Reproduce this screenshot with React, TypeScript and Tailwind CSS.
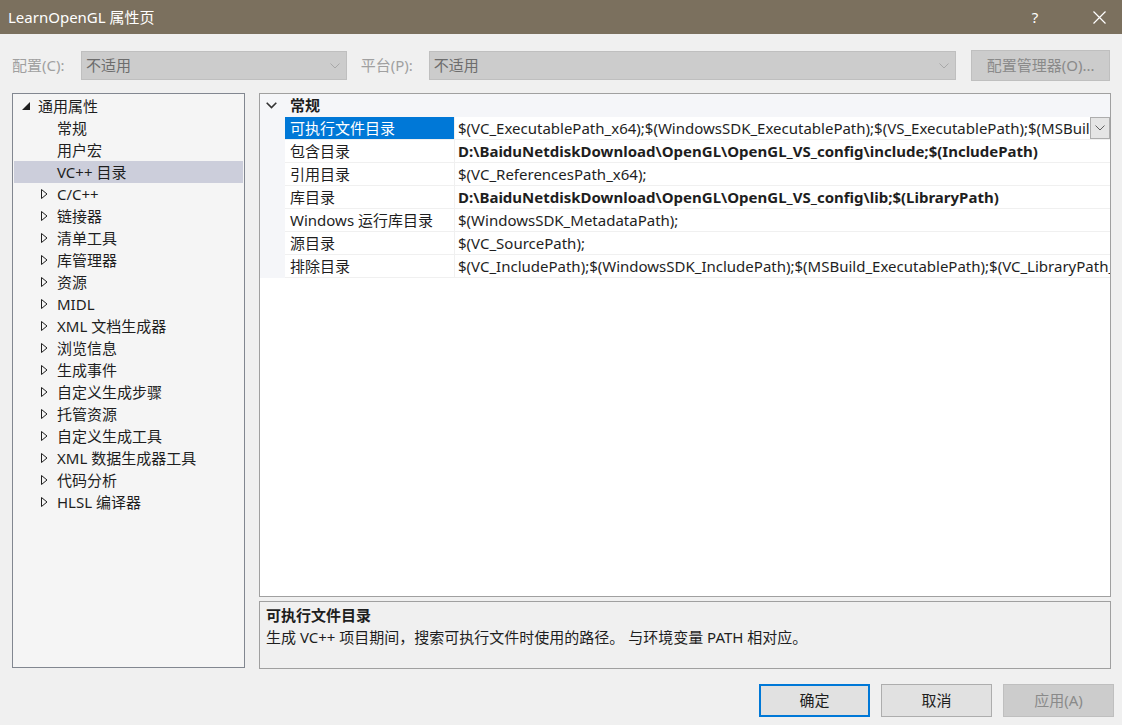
import React from "react"

const tree: { label: string; level: 0 | 1; kind: "open" | "closed" | "leaf"; selected?: boolean }[] = [
  { label: "通用属性", level: 0, kind: "open" },
  { label: "常规", level: 1, kind: "leaf" },
  { label: "用户宏", level: 1, kind: "leaf" },
  { label: "VC++ 目录", level: 1, kind: "leaf", selected: true },
  { label: "C/C++", level: 1, kind: "closed" },
  { label: "链接器", level: 1, kind: "closed" },
  { label: "清单工具", level: 1, kind: "closed" },
  { label: "库管理器", level: 1, kind: "closed" },
  { label: "资源", level: 1, kind: "closed" },
  { label: "MIDL", level: 1, kind: "closed" },
  { label: "XML 文档生成器", level: 1, kind: "closed" },
  { label: "浏览信息", level: 1, kind: "closed" },
  { label: "生成事件", level: 1, kind: "closed" },
  { label: "自定义生成步骤", level: 1, kind: "closed" },
  { label: "托管资源", level: 1, kind: "closed" },
  { label: "自定义生成工具", level: 1, kind: "closed" },
  { label: "XML 数据生成器工具", level: 1, kind: "closed" },
  { label: "代码分析", level: 1, kind: "closed" },
  { label: "HLSL 编译器", level: 1, kind: "closed" },
]

const props: { name: string; value: string; bold?: boolean; selected?: boolean }[] = [
  {
    name: "可执行文件目录",
    value: "$(VC_ExecutablePath_x64);$(WindowsSDK_ExecutablePath);$(VS_ExecutablePath);$(MSBuild_ExecutablePath);$(FxCopDir);$(PATH);",
    selected: true,
  },
  { name: "包含目录", value: "D:\\BaiduNetdiskDownload\\OpenGL\\OpenGL_VS_config\\include;$(IncludePath)", bold: true },
  { name: "引用目录", value: "$(VC_ReferencesPath_x64);" },
  { name: "库目录", value: "D:\\BaiduNetdiskDownload\\OpenGL\\OpenGL_VS_config\\lib;$(LibraryPath)", bold: true },
  { name: "Windows 运行库目录", value: "$(WindowsSDK_MetadataPath);" },
  { name: "源目录", value: "$(VC_SourcePath);" },
  {
    name: "排除目录",
    value: "$(VC_IncludePath);$(WindowsSDK_IncludePath);$(MSBuild_ExecutablePath);$(VC_LibraryPath_x64);",
  },
]

function Chevron({ color = "#8a8a8a" }: { color?: string }) {
  return (
    <svg width="10" height="6" viewBox="0 0 10 6" fill="none">
      <path d="M0.5 0.5L5 5L9.5 0.5" stroke={color} strokeWidth="1" />
    </svg>
  )
}

function Combo({ width }: { width: string }) {
  return (
    <div className={`${width} h-[29px] bg-[#cccccc] border border-[#bfbfbf] flex items-center justify-between pl-[4px] pr-[6px] text-[#6d6d6d]`}>
      <span>不适用</span>
      <Chevron color="#a8a8a8" />
    </div>
  )
}

export default function App() {
  return (
    <div className="w-[1122px] h-[725px] bg-[#f0f0f0] flex flex-col overflow-hidden text-[15px] text-[#1e1e1e] font-['Noto_Sans','Noto_Sans_CJK_SC',sans-serif]">
      {/* 标题栏 */}
      <div className="h-[34px] bg-[#7b705e] flex items-center text-white shrink-0">
        <span className="pl-[8px] flex-1">LearnOpenGL 属性页</span>
        <span className="w-[30px] text-center mr-[26px]">?</span>
        <span className="w-[46px] flex justify-center">
          <svg width="13" height="13" viewBox="0 0 13 13">
            <path d="M0.5 0.5L12.5 12.5M12.5 0.5L0.5 12.5" stroke="white" strokeWidth="1.2" />
          </svg>
        </span>
      </div>

      {/* 配置 / 平台 */}
      <div className="mt-[16px] h-[31px] flex items-center pl-[12px] pr-[12px] text-[#a0a0a0]">
        <span className="w-[69px] whitespace-nowrap">配置(C):</span>
        <Combo width="w-[266px]" />
        <span className="ml-[14px] w-[68px] whitespace-nowrap">平台(P):</span>
        <Combo width="w-[528px]" />
        <div className="ml-[15px] w-[139px] h-[31px] bg-[#cccccc] border border-[#bfbfbf] flex items-center justify-center text-[#8a8a8a] whitespace-nowrap">
          配置管理器(O)...
        </div>
      </div>

      {/* 主体 */}
      <div className="mt-[12px] flex pl-[12px] gap-[14px]">
        {/* 树 */}
        <div className="w-[233px] h-[575px] bg-[#f5f5f5] border border-[#828790] py-[1px] px-[1px]">
          {tree.map((t) => (
            <div
              key={t.label}
              className={`h-[22px] flex items-center ${t.selected ? "bg-[#cccedb]" : ""}`}
            >
              {t.kind === "open" && (
                <span className="w-[24px] pl-[8px] flex items-center">
                  <svg width="8" height="8" viewBox="0 0 8 8">
                    <path d="M8 0L8 8L0 8Z" fill="#1e1e1e" />
                  </svg>
                </span>
              )}
              {t.kind === "closed" && (
                <span className="w-[43px] pl-[27px] flex items-center">
                  <svg width="7" height="10" viewBox="0 0 7 10">
                    <path d="M0.5 0.5L6 5L0.5 9.5Z" fill="none" stroke="#1e1e1e" strokeWidth="1" />
                  </svg>
                </span>
              )}
              {t.kind === "leaf" && <span className="w-[43px]" />}
              <span className="whitespace-nowrap">{t.label}</span>
            </div>
          ))}
        </div>

        {/* 属性表 + 说明 */}
        <div className="w-[852px] flex flex-col gap-[4px]">
          <div className="h-[504px] bg-white border border-[#a0a0a0] flex flex-col overflow-hidden">
            <div className="h-[23px] bg-[#f5f6f9] flex items-center shrink-0">
              <span className="w-[30px] pl-[6px] flex items-center">
                <svg width="11" height="7" viewBox="0 0 11 7" fill="none">
                  <path d="M0.7 0.7L5.5 5.5L10.3 0.7" stroke="#333" strokeWidth="1.6" />
                </svg>
              </span>
              <span className="font-bold">常规</span>
            </div>
            {props.map((p) => (
              <div key={p.name} className="h-[23px] flex shrink-0 bg-[#f5f6f9]">
                <div className="w-[25px] shrink-0" />
                <div
                  className={`w-[169px] shrink-0 pl-[5px] flex items-center border-b border-[#f0f0f0] whitespace-nowrap ${
                    p.selected ? "bg-[#0078d7] text-white" : "bg-white"
                  }`}
                >
                  {p.name}
                </div>
                <div className="w-px bg-[#f0f0f0] shrink-0" />
                <div className="flex-1 min-w-0 bg-white border-b border-[#f0f0f0] flex items-center relative overflow-hidden">
                  <span className={`pl-[3px] whitespace-nowrap ${p.bold ? "font-bold" : ""}`}>{p.value}</span>
                  {p.selected && (
                    <span className="absolute right-0 top-0 w-[20px] h-[22px] bg-[#e5e5e5] border border-[#adadad] flex items-center justify-center">
                      <Chevron color="#606060" />
                    </span>
                  )}
                </div>
              </div>
            ))}
          </div>

          <div className="h-[68px] bg-[#f0f0f0] border border-[#a0a0a0] pl-[6px] pt-[2px]">
            <div className="font-bold h-[22px] flex items-center">可执行文件目录</div>
            <div className="h-[22px] flex items-center whitespace-nowrap">生成 VC++ 项目期间，搜索可执行文件时使用的路径。 与环境变量 PATH 相对应。</div>
          </div>
        </div>
      </div>

      {/* 按钮 */}
      <div className="mt-[15px] flex justify-end gap-[11px] pr-[8px]">
        <div className="w-[111px] h-[33px] bg-[#e1e1e1] border-2 border-[#0078d7] flex items-center justify-center">确定</div>
        <div className="w-[111px] h-[33px] bg-[#e1e1e1] border border-[#adadad] flex items-center justify-center">取消</div>
        <div className="w-[111px] h-[33px] bg-[#cccccc] border border-[#bfbfbf] flex items-center justify-center text-[#8a8a8a]">应用(A)</div>
      </div>
    </div>
  )
}
